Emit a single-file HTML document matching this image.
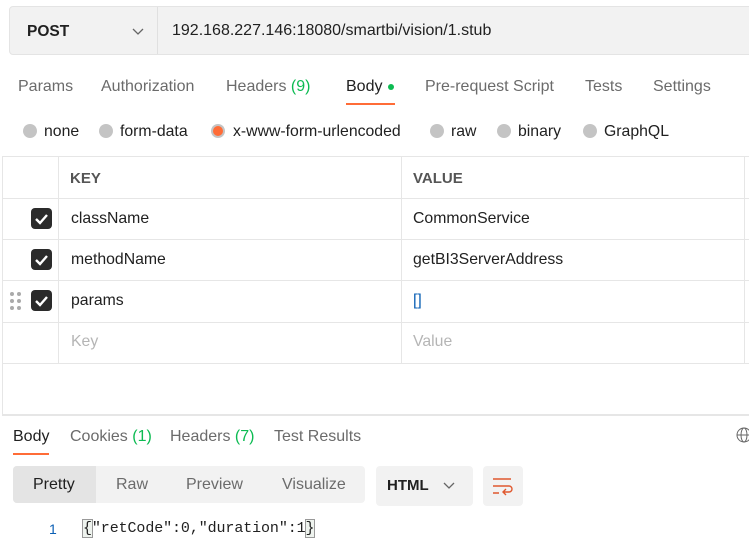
<!DOCTYPE html>
<html><head><style>
*{margin:0;padding:0;box-sizing:border-box}
body{width:749px;height:558px;background:#fff;font-family:"Liberation Sans",sans-serif;color:#212121;position:relative;overflow:hidden;font-size:15.8px}
.a{position:absolute;white-space:nowrap}
.g{color:#6b6b6b}
.gr{color:#0cbb52}
.hl{position:absolute;background:#e6e6e6}
.radio{position:absolute;width:14px;height:14px;border-radius:50%;background:#c4c4c4;top:124px}
.cb{position:absolute;left:31px;width:21px;height:21px;border-radius:4px;background:#2b2b2b}
.cb svg{position:absolute;left:3px;top:4px}
.t{font-size:16px;top:78px}
</style></head><body>
<div class="a" style="left:9px;top:6px;width:745px;height:49px;background:#f2f2f2;border:1px solid #e4e4e4;border-radius:4px"></div>
<div class="a" style="left:157px;top:7px;width:1px;height:47px;background:#e0e0e0"></div>
<div class="a" style="left:27px;top:23px;font-weight:bold;font-size:15.5px">POST</div>
<svg class="a" style="left:132px;top:28px" width="12" height="8"><path d="M1 1l5 5 5-5" stroke="#666" fill="none" stroke-width="1.3"/></svg>
<div class="a" style="left:172px;top:22px;font-size:16px">192.168.227.146:18080/smartbi/vision/1.stub</div>

<div class="a g t" style="left:18px">Params</div>
<div class="a g t" style="left:101px">Authorization</div>
<div class="a g t" style="left:226px">Headers <span class="gr">(9)</span></div>
<div class="a t" style="left:346px">Body</div>
<div class="a" style="left:388px;top:84px;width:6px;height:6px;border-radius:50%;background:#0cbb52"></div>
<div class="a" style="left:346px;top:103px;width:49px;height:2px;background:#ff6c37"></div>
<div class="a g t" style="left:425px">Pre-request Script</div>
<div class="a g t" style="left:585px">Tests</div>
<div class="a g t" style="left:653px">Settings</div>

<div class="radio" style="left:23px"></div><div class="a" style="left:44px;top:123px">none</div>
<div class="radio" style="left:99px"></div><div class="a" style="left:120px;top:123px">form-data</div>
<div class="radio" style="left:211px;background:#ff6c37;border:2px solid #c4c4c4"></div><div class="a" style="left:233px;top:123px">x-www-form-urlencoded</div>
<div class="radio" style="left:430px"></div><div class="a" style="left:451px;top:123px">raw</div>
<div class="radio" style="left:497px"></div><div class="a" style="left:518px;top:123px">binary</div>
<div class="radio" style="left:583px"></div><div class="a" style="left:604px;top:123px">GraphQL</div>

<div class="hl" style="left:3px;top:156px;width:746px;height:1px"></div>
<div class="hl" style="left:3px;top:198px;width:746px;height:1px"></div>
<div class="hl" style="left:3px;top:239px;width:746px;height:1px"></div>
<div class="hl" style="left:3px;top:280px;width:746px;height:1px"></div>
<div class="hl" style="left:3px;top:322px;width:746px;height:1px"></div>
<div class="hl" style="left:3px;top:363px;width:746px;height:1px"></div>
<div class="hl" style="left:2px;top:156px;width:1px;height:258px"></div>
<div class="hl" style="left:58px;top:156px;width:1px;height:208px"></div>
<div class="hl" style="left:401px;top:156px;width:1px;height:208px"></div>
<div class="hl" style="left:744px;top:156px;width:1px;height:208px"></div>
<div class="a" style="left:70px;top:170px;font-weight:bold;color:#555;font-size:15px">KEY</div>
<div class="a" style="left:413px;top:170px;font-weight:bold;color:#555;font-size:15px">VALUE</div>

<div class="cb" style="top:208px"><svg width="15" height="13"><path d="M2 7l4 4 7-8" stroke="#fff" stroke-width="2.4" fill="none"/></svg></div>
<div class="cb" style="top:249px"><svg width="15" height="13"><path d="M2 7l4 4 7-8" stroke="#fff" stroke-width="2.4" fill="none"/></svg></div>
<div class="cb" style="top:290px"><svg width="15" height="13"><path d="M2 7l4 4 7-8" stroke="#fff" stroke-width="2.4" fill="none"/></svg></div>
<svg class="a" style="left:9px;top:291px" width="14" height="20" fill="#aaa"><circle cx="3" cy="3" r="2"/><circle cx="10" cy="3" r="2"/><circle cx="3" cy="10" r="2"/><circle cx="10" cy="10" r="2"/><circle cx="3" cy="17" r="2"/><circle cx="10" cy="17" r="2"/></svg>
<div class="a" style="left:71px;top:210px">className</div>
<div class="a" style="left:413px;top:210px">CommonService</div>
<div class="a" style="left:71px;top:251px">methodName</div>
<div class="a" style="left:413px;top:251px">getBI3ServerAddress</div>
<div class="a" style="left:71px;top:292px">params</div>
<div class="a" style="left:413px;top:292px;color:#0a5fb4">[]</div>
<div class="a" style="left:71px;top:333px;color:#b5b5b5">Key</div>
<div class="a" style="left:413px;top:333px;color:#b5b5b5">Value</div>

<div class="hl" style="left:2px;top:414px;width:747px;height:2px"></div>
<div class="a" style="left:13px;top:428px;font-size:16px">Body</div>
<div class="a" style="left:13px;top:453px;width:36px;height:2px;background:#ff6c37"></div>
<div class="a g" style="left:70px;top:428px;font-size:16px">Cookies <span class="gr">(1)</span></div>
<div class="a g" style="left:170px;top:428px;font-size:16px">Headers <span class="gr">(7)</span></div>
<div class="a g" style="left:274px;top:428px;font-size:16px">Test Results</div>
<svg class="a" style="left:736px;top:427px" width="16" height="16"><circle cx="8" cy="8" r="7" stroke="#666" fill="none"/><ellipse cx="8" cy="8" rx="3" ry="7" stroke="#666" fill="none"/><path d="M1 8h14" stroke="#666"/></svg>

<div class="a" style="left:13px;top:466px;width:352px;height:37px;background:#f2f2f2;border-radius:4px"></div>
<div class="a" style="left:13px;top:466px;width:83px;height:37px;background:#e4e4e4;border-radius:4px 0 0 4px"></div>
<div class="a" style="left:33px;top:476px;font-size:16px">Pretty</div>
<div class="a g" style="left:116px;top:476px;font-size:16px">Raw</div>
<div class="a g" style="left:186px;top:476px;font-size:16px">Preview</div>
<div class="a g" style="left:282px;top:476px;font-size:16px">Visualize</div>
<div class="a" style="left:376px;top:466px;width:97px;height:40px;background:#f2f2f2;border-radius:4px"></div>
<div class="a" style="left:387px;top:477px;font-weight:bold;font-size:15px">HTML</div>
<svg class="a" style="left:443px;top:482px" width="12" height="8"><path d="M1 1l5 5 5-5" stroke="#666" fill="none" stroke-width="1.3"/></svg>
<div class="a" style="left:483px;top:466px;width:40px;height:40px;background:#f2f2f2;border-radius:4px"></div>
<svg class="a" style="left:491px;top:476px" width="24" height="20"><path d="M2 3h18M2 10h16a3 3 0 0 1 0 6h-5M2 17h6M15 13l-3 3 3 3" stroke="#e0582e" stroke-width="1.4" fill="none"/></svg>

<div class="a" style="left:49px;top:521px;color:#0a5fb4;font-size:14px">1</div>
<div class="a" style="left:83px;top:520px;font-family:'Liberation Mono',monospace;font-size:15px;letter-spacing:-0.1px"><span style="outline:1px solid #999;background:#eef3ee">{</span>"retCode":0,"duration":1<span style="outline:1px solid #999;background:#eef3ee">}</span></div>
</body></html>
